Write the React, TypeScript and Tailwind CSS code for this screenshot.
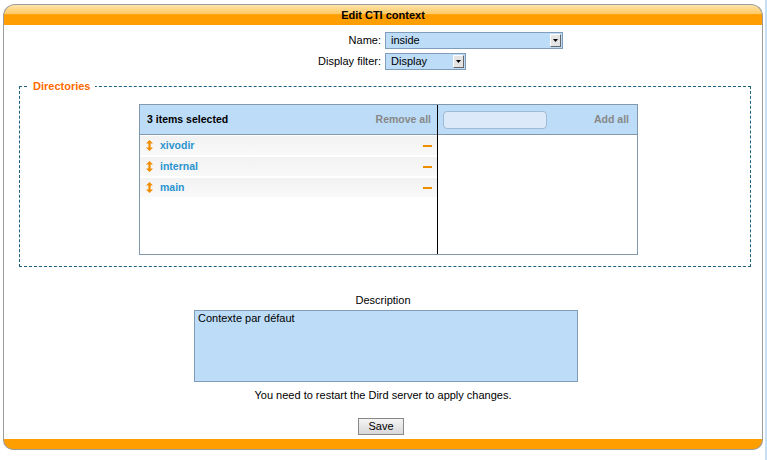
import React from "react";

const font = { fontFamily: '"Liberation Sans", Arial, sans-serif' };

function Select({ value, width }: { value: string; width: string }) {
  return (
    <div className={`flex h-[17px] ${width} items-stretch border border-[#7f9db9] bg-[#bddcf7]`}>
      <div className="flex-1 pl-[5px] text-[11px] leading-[15px] text-black">{value}</div>
      <div className="m-[1px] flex w-[11px] items-center justify-center border border-t-[#fff] border-l-[#fff] border-r-[#666] border-b-[#666] bg-[#e4e4e4]">
        <svg width="5" height="3" viewBox="0 0 5 3"><path d="M0 0h5L2.5 3z" fill="#000" /></svg>
      </div>
    </div>
  );
}

function Row({ name }: { name: string }) {
  return (
    <div className="flex h-[19px] items-center bg-[linear-gradient(#f2f2f2,#f9f9f9)] pl-[6px] pr-[5px]">
      <svg width="7" height="11" viewBox="0 0 7 11" className="mr-[7px]">
        <path d="M3.5 0L7 3.5H4.6v4H7L3.5 11L0 7.5h2.4v-4H0z" fill="#f08c00" />
      </svg>
      <span className="flex-1 text-[10.5px] font-bold text-[#2b94cf]">{name}</span>
      <div className="h-[2px] w-[9px] bg-[#f08c00]" />
    </div>
  );
}

export default function App() {
  return (
    <div className="relative flex h-[460px] w-[767px] bg-white" style={font}>
      <div className="ml-[3px] mt-[4px] flex w-[760px] flex-col">
        <div className="flex h-[21px] items-center justify-center rounded-t-[12px] border border-b-0 border-[#9c9c9c] bg-[linear-gradient(#ffe3a8_0%,#ffc965_45%,#ff9e00_48%,#ff9e00_100%)] text-[11px] font-bold text-black">
          Edit CTI context
        </div>
        <div className="flex flex-col border-x border-[#9c9c9c] bg-white pb-[4px]">
          <div className="mt-[7px] flex items-center">
            <div className="w-[381px] pr-[4px] text-right text-[11px] text-black">Name:</div>
            <Select value="inside" width="w-[178px]" />
          </div>
          <div className="mt-[4px] flex items-center">
            <div className="w-[381px] pr-[4px] text-right text-[11px] text-black">Display filter:</div>
            <Select value="Display" width="w-[81px]" />
          </div>
          <fieldset className="ml-[15px] mr-[11px] mt-[9px] h-[188px] border border-dashed border-[#1d5f7c] px-0 pb-0">
            <legend className="ml-[8px] px-[5px] text-[11px] font-bold leading-[14px] text-[#ff6a00]">Directories</legend>
            <div className="ml-[119px] mt-[11px] flex h-[151px] w-[499px] border border-[#8299ad]">
              <div className="flex w-[297px] flex-col">
                <div className="flex h-[30px] items-center justify-between border-b border-[#8299ad] bg-[#bddcf7] pl-[7px] pr-[6px] text-[10.5px] font-bold">
                  <span className="text-black">3 items selected</span>
                  <span className="text-[#888]">Remove all</span>
                </div>
                <div className="mt-[1px] flex flex-col gap-[2px]">
                  <Row name="xivodir" />
                  <Row name="internal" />
                  <Row name="main" />
                </div>
              </div>
              <div className="w-[1px] bg-black" />
              <div className="flex flex-1 flex-col">
                <div className="flex h-[30px] items-center justify-between border-b border-[#8299ad] bg-[#bddcf7] pl-[5px] pr-[8px] text-[10.5px] font-bold">
                  <div className="h-[18px] w-[104px] rounded-[4px] border border-[#9fbad6] bg-[#dbe9f8]" />
                  <span className="text-[#888]">Add all</span>
                </div>
              </div>
            </div>
          </fieldset>
          <div className="mt-[26px] text-center text-[11px] leading-[14px] text-black">Description</div>
          <div className="ml-[190px] mt-[3px] h-[72px] w-[384px] border border-[#7f9db9] bg-[#bddcf7] px-[3px] text-[11px] leading-[14px] text-black">
            Contexte par défaut
          </div>
          <div className="mt-[6px] text-center text-[11px] leading-[14px] text-black">You need to restart the Dird server to apply changes.</div>
          <div className="mt-[16px] flex">
            <div className="ml-[354px] flex h-[17px] w-[46px] items-center justify-center border border-[#888] bg-[linear-gradient(#f4f4f4,#d8d8d8)] text-[11px] text-black">
              Save
            </div>
          </div>
        </div>
        <div className="h-[11px] rounded-b-[10px] border border-t-0 border-[#9c9c9c] bg-[#ff9e00]" />
      </div>
      <div className="ml-auto h-full w-[2px] bg-[#c6e0f7]" />
    </div>
  );
}
